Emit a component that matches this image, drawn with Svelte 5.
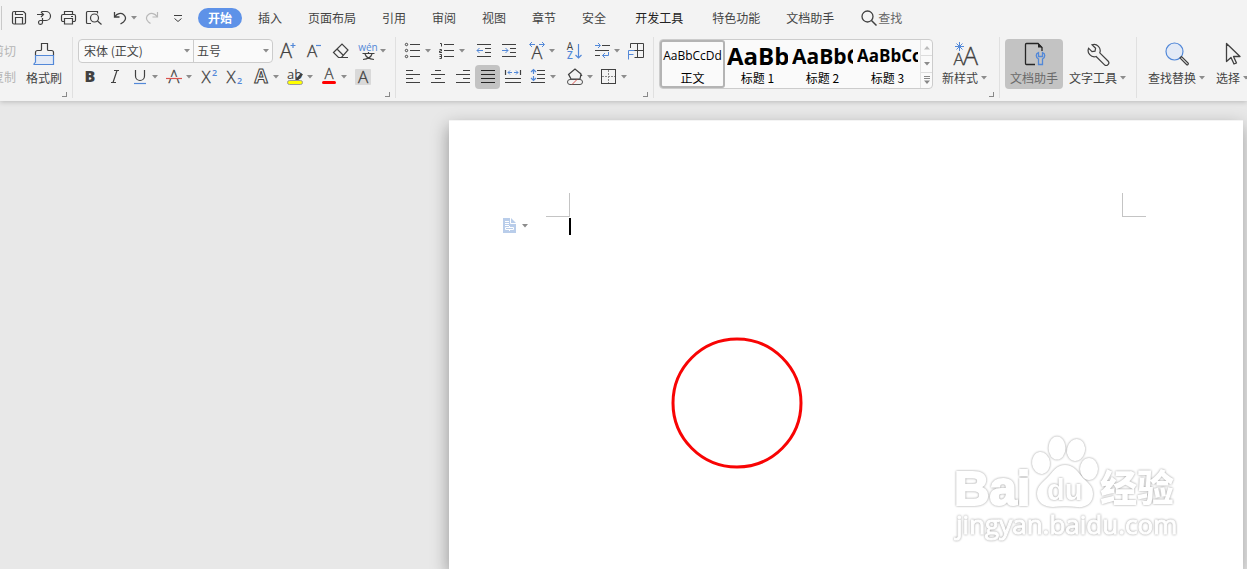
<script>
  const K = 'stroke="#404040" fill="none"';
  const B = 'stroke="#5288d8" fill="none"';
  const letter = (x, y, size, t, extra = 'stroke="#404040" stroke-width=".3"') =>
    `<text x="${x}" y="${y}" font-size="${size}" text-anchor="middle" fill="#404040" ${extra}>${t}</text>`;

  const icons = {
    save: `<path ${K} stroke-width="1.200" d="M7 5.500h9.500l2 2v9a1.500 1.500 0 0 1-1.500 1.500h-10a1.500 1.500 0 0 1-1.500-1.500v-9.500a1.500 1.500 0 0 1 1.500-1.500zM8.500 18v-6.500h7v6.500M8.500 5.500v3h7.500"/>`,
    export: `<path ${K} stroke-width="1.200" d="M5 8.500h6.500M9 6l2.500 2.500L9 11M9.500 5.500h4.500a4.500 4.500 0 0 1 0 9h-6a2 2 0 1 0 2.500 2V12"/>`,
    print: `<path ${K} stroke-width="1.200" d="M7.500 8.500v-3h8v3M7 15.500h-1a1.500 1.500 0 0 1-1.500-1.500v-4a1.500 1.500 0 0 1 1.500-1.500h11a1.500 1.500 0 0 1 1.500 1.500v4a1.500 1.500 0 0 1-1.500 1.500h-1M7.500 12.500h8v5.500h-8zM14 10.500h2"/>`,
    preview: `<path ${K} stroke-width="1.200" d="M9 17.500h-3.500a1 1 0 0 1-1-1v-10a1 1 0 0 1 1-1h10v2M15.500 15l4 3.500"/><circle ${K} stroke-width="1.200" cx="12.500" cy="12" r="4"/>`,
    undo: `<path ${K} stroke-width="1.300" d="M7.500 6v5h5M8 10.500c2-3 6-4 8.500-2s3 5 0 7.500l-3 2"/>`,
    redo: `<path stroke="#b9b9b9" fill="none" stroke-width="1.200" d="M16.500 6v5h-5M16 10.500c-2-3-6-4-8.500-2s-3 5 0 7.500l2 1.500"/>`,
    more: `<path ${K} d="M8 9.500h8M8.500 12.500l3.500 3 3.500-3"/>`,
    grow: letter(11, 19, 20, 'A') + `<path ${B} stroke-width="1.200" d="M15.500 6.500h5M18 4v5"/>`,
    shrink: letter(10, 18, 17, 'A') + `<path ${B} stroke-width="1.200" d="M14 6.500h5"/>`,
    eraser: `<path ${K} stroke-width="1.200" d="M4.500 13.500l8.500-8.500 6 6-6.500 7.500h-3zM8 10l6 6M12 18.500h7"/>`,
    phonetic: `<text x="12" y="12" font-size="10" text-anchor="middle" fill="#5288d8" style="font-weight:400">wén</text><path ${K} stroke-width="1.200" d="M6.500 14.500h12M12.500 13v1.500M9 15c1 3 4 5 9 5.500M16 15c-1 3-4 5-9 5.500"/>`,
    bold: letter(12, 17, 16, 'B', 'style="font-weight:800"'),
    italic: `<path ${K} stroke-width="1.200" d="M11 5.500h5M8 17.500h5M14 5.500l-4 12"/>`,
    underline: `<path ${K} stroke-width="1.200" d="M7.500 5v6a4.500 4.500 0 0 0 9 0v-6"/><path ${B} stroke-width="1.200" d="M6 18.500h12"/>`,
    strike: letter(12, 18, 18, 'A') + `<path stroke="#f3f3f3" d="M4 12.500h16"/><path stroke="#d9534f" stroke-width="1.200" d="M4 13.500h16"/>`,
    sup: letter(10, 18, 17, 'X') + `<text x="16" y="11" font-size="9" fill="#5288d8" style="font-weight:600">2</text>`,
    sub: letter(10, 18, 17, 'X') + `<text x="16" y="19" font-size="9" fill="#5288d8" style="font-weight:600">2</text>`,
    effect: `<text x="12" y="18" font-size="19" text-anchor="middle" fill="#f3f3f3" stroke="#404040" style="font-weight:700">A</text>`,
    highlight: `<text x="4" y="14" font-size="13" fill="#404040" style="font-weight:400">ab</text><path d="M12 15l6-7 2 1.500-5 6z" fill="#404040"/><rect x="4.500" y="15.500" width="15" height="4" rx="2" fill="#ff0" stroke="#999"/>`,
    color: letter(12, 14, 15, 'A') + `<rect x="5" y="16" width="14" height="3" rx="1.500" fill="#f00"/>`,
    shade: `<rect x="4" y="4" width="16" height="16" rx="1" fill="#d9d9d9"/>` + letter(12, 18, 17, 'A'),
    bullets: `<g ${K}><circle cx="5.500" cy="5.500" r="1.200"/><circle cx="5.500" cy="11.500" r="1.200"/><circle cx="5.500" cy="17.500" r="1.200"/><path d="M9 5.500h10M9 11.500h10M9 17.500h10" stroke-width="1.200"/></g>`,
    numbers: `<g ${K}><path d="M5 4.500h1.500v3M4.500 10.500h2v1.500h-2v1.500h2.500M4.500 15.500h2v4h-2M4.500 17.500h2"/><path d="M9 5.500h10M9 11.500h10M9 17.500h10" stroke-width="1.200"/></g>`,
    outdent: `<path ${K} stroke-width="1.200" d="M5 5.500h14M13 9.500h6M13 13.500h6M5 17.500h14"/><path ${B} d="M5 11.500h6M7.500 9L5 11.500 7.500 14"/>`,
    indent: `<path ${K} stroke-width="1.200" d="M5 5.500h14M13 9.500h6M13 13.500h6M5 17.500h14"/><path ${B} d="M5 11.500h6M8.500 9l2.500 2.500L8.500 14"/>`,
    scale: letter(12, 20, 18, 'A') + `<path ${B} d="M5 5.500h5M7 3L4.500 5.500 7 8M14 5.500h5M17 3l2.500 2.500L17 8"/>`,
    sort: letter(8, 11, 10, 'A', 'style="font-weight:400"') + `<text x="8" y="20" font-size="10" text-anchor="middle" fill="#5288d8" style="font-weight:600">Z</text><path ${B} stroke-width="1.200" d="M16.500 5v14M13.500 16l3 3 3-3"/>`,
    wrap: `<path ${K} stroke-width="1.200" d="M12 6.500h8M5 11.500h14M5 16.500h5"/><path ${B} d="M5 6.500h5M8 4l2.500 2.500L8 9M18.500 13v3.500h-6M15 14l-2.500 2.500L15 19"/>`,
    frame: `<path ${K} d="M6.500 9v-4.500h13v14h-9M13.500 4.500v14M6.500 11.500h13"/><path ${B} d="M10.500 11.500h-6v9M4.500 15.500h5"/>`,
    left: `<path ${K} stroke-width="1.200" d="M5 5.500h7M5 9.500h14M5 13.500h7M5 17.500h14"/>`,
    center: `<path ${K} stroke-width="1.200" d="M9 5.500h6M5 9.500h14M9 13.500h6M5 17.500h14"/>`,
    right: `<path ${K} stroke-width="1.200" d="M12 5.500h7M5 9.500h14M12 13.500h7M5 17.500h14"/>`,
    justify: `<path stroke="#252525" stroke-width="1.200" d="M5 5.500h14M5 9.500h14M5 13.500h14M5 17.500h14"/>`,
    spread: `<path ${K} stroke-width="1.200" d="M4.500 5v5M19.500 5v5M4 13.500h16M4 17.500h16"/><path ${B} d="M7 7.500h4M9 5.500L7 7.500l2 2M13 7.500h4M15 5.500l2 2-2 2"/>`,
    spacing: `<path ${K} stroke-width="1.200" d="M11 5.500h8M11 9.500h8M11 13.500h8M5 17.500h14"/><path ${B} stroke-width="1.200" d="M7.500 5v4M5 7l2.500-2.500L10 7M7.500 11v4M5 13l2.500 2.500L10 13"/>`,
    fill: `<path ${K} stroke-width="1.200" d="M5.500 9.500l6.500-5.500 6 5-1 5h-9zM6 10l2 4M17 8l2 3"/><rect x="4.500" y="14.500" width="15" height="5" rx="2.500" fill="#f3f3f3" stroke="#505050"/><path stroke="#d9534f" d="M9 19.500l5-5"/>`,
    border: `<rect ${K} x="4.500" y="4.500" width="14" height="14"/><path stroke="#888" stroke-dasharray="2 1" d="M11.500 5v13M5 11.500h13"/>`
  };

  const big = {
    brush: `<path d="M5.500 13.500h18v9h-18z" fill="#e3eaf6"/><path ${K} stroke-width="1.200" d="M5.500 13.500v-3a2 2 0 0 1 2-2h3a1 1 0 0 0 1-1V1.500h6v6a1 1 0 0 0 1 1h3a2 2 0 0 1 2 2v3"/><path ${B} stroke-width="1.200" d="M5.500 13.500h18v9H3.500M5.500 13.500v6.500l-2 2.500"/>`,
    newStyle: letter(7.500, 23, 17, 'A') + letter(19.500, 23, 25, 'A') + `<path ${B} d="M8.500 0v9M4 4.500h9M5.500 1.500l6 6M11.500 1.500l-6 6"/>`,
    assistant: `<path stroke="#252525" fill="none" stroke-width="1.300" d="M15 22.500H6.500a1 1 0 0 1-1-1v-19a1 1 0 0 1 1-1H18l4 4V9"/><path d="M18 1l4.500 4.500H18z" fill="#252525"/><path ${B} stroke-width="1.300" d="M18.500 10.500c-3 1-3 5 0 6.500v5.500h4v-5.500c3-1.500 3-5.500 0-6.500v4h-4z"/>`,
    wrench: `<path ${K} stroke-width="1.200" d="M8 2.800a6.200 6.200 0 0 1 7.800 8l8.200 8.200a2.600 2.600 0 0 1-3.700 3.700l-8.200-8.200A6.200 6.200 0 0 1 4.600 6.200l3.400 3.500 3-.5.6-2.900z"/>`,
    find: `<circle cx="11.500" cy="9.500" r="8.500" fill="#e3eaf6" stroke="#5288d8" stroke-width="1.200"/><path ${K} stroke-width="1.100" d="M17 16l1.500-1.500 6.500 6.500a1 1 0 0 1-1.500 1.500z"/>`,
    pointer: `<path ${K} stroke-width="1.300" stroke-linejoin="round" d="M7.500 1.500v18l4.500-4 3 6.500 2.500-1-3-6.500h6.500z"/>`
  };

  const tabs = ['插入', '页面布局', '引用', '审阅', '视图', '章节', '安全', '开发工具', '特色功能', '文档助手'];

  const fontRow1 = [
    { i: 'grow', t: '增大字号' }, { i: 'shrink', t: '减小字号' },
    { i: 'eraser', t: '清除格式' }, { i: 'phonetic', t: '拼音指南', c: true }
  ];
  const fontRow2 = [
    { i: 'bold', t: '加粗' }, { i: 'italic', t: '倾斜' }, { i: 'underline', t: '下划线', c: true },
    { i: 'strike', t: '删除线', c: true }, { i: 'sup', t: '上标' }, { i: 'sub', t: '下标' },
    { i: 'effect', t: '文字效果', c: true, s: true }, { i: 'highlight', t: '突出显示', c: true },
    { i: 'color', t: '字体颜色', c: true }, { i: 'shade', t: '字符底纹' }
  ];
  const paraRow1 = [
    { i: 'bullets', t: '项目符号', c: true }, { i: 'numbers', t: '编号', c: true },
    { i: 'outdent', t: '减少缩进量', s: true }, { i: 'indent', t: '增加缩进量' },
    { i: 'scale', t: '中文版式', c: true, s: true }, { i: 'sort', t: '排序', s: true },
    { i: 'wrap', t: '显示编辑标记', c: true, s: true }, { i: 'frame', t: '制表位' }
  ];
  const paraRow2 = [
    { i: 'left', t: '左对齐' }, { i: 'center', t: '居中' }, { i: 'right', t: '右对齐' },
    { i: 'justify', t: '两端对齐', on: true }, { i: 'spread', t: '分散对齐' },
    { i: 'spacing', t: '行距', c: true }, { i: 'fill', t: '底纹颜色', c: true, s: true },
    { i: 'border', t: '边框', c: true }
  ];
  const styles = [
    { sample: 'AaBbCcDd', name: '正文', k: 'body' },
    { sample: 'AaBb', name: '标题 1', k: 'h1' },
    { sample: 'AaBbC', name: '标题 2', k: 'h2' },
    { sample: 'AaBbCc', name: '标题 3', k: 'h3' }
  ];
  let current = $state('正文');
</script>

{#snippet caret()}
  <svg class="caret" width="6" height="4" viewBox="0 0 6 4" aria-hidden="true"><path d="M0 0h6L3 3.500z" fill="#8c8c8c" /></svg>
{/snippet}

{#snippet tool(b)}
  <button class="tool" class:split={b.c} class:spaced={b.s} class:on={b.on} aria-label={b.t}>
    <svg width="24" height="24" viewBox="0 0 24 24" aria-hidden="true">{@html icons[b.i]}</svg>
    {#if b.c}{@render caret()}{/if}
  </button>
{/snippet}

{#snippet bigTool(icon, label, hasCaret, on)}
  <button class="big" class:pressed={on}>
    <svg width="28" height="24" viewBox="0 0 28 24" aria-hidden="true">{@html big[icon]}</svg>
    <span class="label">{label}{#if hasCaret}{@render caret()}{/if}</span>
  </button>
{/snippet}

{#snippet launcher()}
  <button class="launcher" aria-label="更多选项"></button>
{/snippet}

<div class="app">
  <header class="topbar">
    <div class="quick">
      {@render tool({ i: 'save', t: '保存' })}
      {@render tool({ i: 'export', t: '输出为PDF' })}
      {@render tool({ i: 'print', t: '打印' })}
      {@render tool({ i: 'preview', t: '打印预览' })}
      {@render tool({ i: 'undo', t: '撤销', c: true })}
      {@render tool({ i: 'redo', t: '恢复' })}
      {@render tool({ i: 'more', t: '自定义' })}
    </div>
    <nav>
      <button class="tab active">开始</button>
      {#each tabs as t}
        <button class="tab" class:wide={t === '开发工具'}>{t}</button>
      {/each}
    </nav>
    <button class="search">
      <svg width="16" height="16" viewBox="0 0 16 16" aria-hidden="true"><circle cx="6.500" cy="6.500" r="5.500" stroke="#404040" stroke-width="1.300" fill="none" /><path d="M10.500 10.500l5 5" stroke="#404040" stroke-width="1.500" /></svg>
      查找
    </button>
  </header>

  <div class="ribbon">
    <section class="group clip">
      <div class="edge">
        <button disabled>剪切</button>
        <button disabled>复制</button>
      </div>
      {@render bigTool('brush', '格式刷', false, false)}
      {@render launcher()}
    </section>

    <section class="group font">
      <div class="row roomy">
        <div class="combo">
          <label class="family"><select aria-label="字体"><option>宋体 (正文)</option></select>{@render caret()}</label>
          <label class="size"><select aria-label="字号"><option>五号</option></select>{@render caret()}</label>
        </div>
        {#each fontRow1 as b}{@render tool(b)}{/each}
      </div>
      <div class="row">
        {#each fontRow2 as b}{@render tool(b)}{/each}
      </div>
      {@render launcher()}
    </section>

    <section class="group para">
      <div class="row">
        {#each paraRow1 as b}{@render tool(b)}{/each}
      </div>
      <div class="row">
        {#each paraRow2 as b}{@render tool(b)}{/each}
      </div>
      {@render launcher()}
    </section>

    <section class="group style">
      <div class="gallery">
        {#each styles as s}
          <button class="card {s.k}" class:chosen={current === s.name} onclick={() => (current = s.name)}>
            <span class="sample">{s.sample}</span>
            <span class="name">{s.name}</span>
          </button>
        {/each}
        <div class="scroller">
          <button aria-label="上一行"><svg width="6" height="4" viewBox="0 0 6 4"><path d="M0 3.500h6L3 0z" fill="#bbb" /></svg></button>
          <button aria-label="下一行">{@render caret()}</button>
          <button aria-label="展开"><svg width="6" height="8" viewBox="0 0 6 8"><path d="M0 .5h6M0 2.500h6" stroke="#888" /><path d="M0 4.500h6L3 8z" fill="#888" /></svg></button>
        </div>
      </div>
      {@render bigTool('newStyle', '新样式', true, false)}
      {@render launcher()}
    </section>

    <section class="group helper">
      {@render bigTool('assistant', '文档助手', false, true)}
      {@render bigTool('wrench', '文字工具', true, false)}
    </section>

    <section class="group edit">
      {@render bigTool('find', '查找替换', true, false)}
      {@render bigTool('pointer', '选择', true, false)}
    </section>
  </div>

  <main>
    <article class="page">
      <i class="mark tl"></i>
      <i class="mark tr"></i>
      <button class="para-tag" aria-label="段落布局">
        <svg width="13" height="15" viewBox="0 0 13 15" aria-hidden="true"><path d="M0 0h8l5 5v10H0z" fill="#b9cdea" /><path d="M7.500 0v5.500H13M2 3.500h4M2 5.500h4M2 7.500h4M2.500 9.500h8v2h-8zM6.500 8v1M6.500 12v1" stroke="#fff" fill="none" /></svg>
        {@render caret()}
      </button>
      <div class="cursor"></div>
      <svg class="ring" width="132" height="132" viewBox="0 0 132 132" aria-hidden="true"><circle cx="66" cy="66" r="64" fill="none" stroke="#f80404" stroke-width="3" /></svg>
      <svg class="logo" width="240" height="116" viewBox="0 0 240 116">
        <g fill="#fff">
          <g class="soft">
            <ellipse cx="90" cy="30" rx="9" ry="11" transform="rotate(-8 90 30)" />
            <ellipse cx="106" cy="15" rx="8.500" ry="11.500" />
            <ellipse cx="125" cy="17" rx="9" ry="11" transform="rotate(12 125 17)" />
            <ellipse cx="138" cy="36" rx="9" ry="11" />
            <path d="M114 32c9 0 13 7 18 13 5 5 10 8 10 16 0 10-8 14-16 13-8-1-16-1-24 0-8 0-16-4-16-13 0-8 5-11 10-16 6-6 9-13 18-13z" />
          </g>
          <text class="soft latin" x="3" y="72" font-size="49">Bai</text>
          <text class="soft du" x="96" y="67" font-size="29">du</text>
          <text class="soft cjk" x="149" y="69" font-size="37">经验</text>
          <text class="soft url" x="5" y="101" font-size="26">jingyan.baidu.com</text>
        </g>
      </svg>
    </article>
  </main>
</div>

<style>
  :global(body) {
    margin: 0;
  }
  .app {
    display: flex;
    flex-direction: column;
    height: 100vh;
    overflow: hidden;
    background: #f3f3f3;
    color: #444;
    font: 12px/20px "Noto Sans CJK SC", sans-serif;
  }
  button,
  select {
    font: inherit;
    color: inherit;
    background: none;
    border: 0;
    padding: 0;
    margin: 0;
  }
  svg {
    display: block;
    flex: none;
  }
  svg :global(text) {
    font-family: "Open Sans", sans-serif;
    font-weight: 300;
  }
  .topbar {
    position: relative;
    z-index: 2;
    background: #f3f3f3;
    display: flex;
    align-items: center;
    height: 36px;
    flex: none;
    white-space: nowrap;
  }
  .quick {
    display: flex;
    align-items: center;
    margin-left: 1px;
    padding-left: 4px;
    border-left: 1px solid #c9c9c9;
    height: 24px;
  }
  nav {
    display: flex;
    margin-left: 8px;
  }
  .tab {
    padding: 0 13px;
  }
  .tab.wide {
    padding: 0 16px;
    color: #222;
  }
  .tab.active {
    padding: 0 10px;
    margin-right: 3px;
    border-radius: 10px;
    background: #5e92e8;
    color: #fff;
    font-weight: 700;
  }
  .search {
    display: flex;
    align-items: center;
    gap: 1px;
    margin-left: 14px;
    color: #666;
  }
  .ribbon {
    position: relative;
    z-index: 1;
    display: flex;
    flex: none;
    padding: 1px 0 3px;
    background: #f3f3f3;
    box-shadow: 0 1px 5px rgba(0, 0, 0, 0.2);
    white-space: nowrap;
  }
  .group {
    position: relative;
    flex: none;
    box-sizing: border-box;
    min-height: 61px;
    padding-top: 1px;
    border-right: 1px solid #e0e0e0;
  }
  .clip,
  .style,
  .helper,
  .edit {
    display: flex;
    align-items: flex-start;
    padding-top: 2px;
  }
  .clip {
    gap: 10px;
    padding-right: 10px;
  }
  .edge {
    display: flex;
    flex-direction: column;
    align-items: flex-end;
    gap: 6px;
    width: 16px;
    overflow: hidden;
    color: #b5b5b5;
    padding-top: 2px;
  }
  .font {
    padding-left: 4px;
    padding-right: 6px;
  }
  .para {
    padding-left: 4px;
    padding-right: 5px;
  }
  .style {
    padding-left: 5px;
    padding-right: 12px;
    gap: 9px;
  }
  .helper {
    padding-left: 5px;
    padding-right: 10px;
    gap: 6px;
  }
  .edit {
    padding-left: 11px;
    gap: 11px;
    border: 0;
  }
  .row {
    display: flex;
    align-items: center;
    height: 26px;
  }
  .roomy {
    gap: 2px;
  }
  .tool {
    display: flex;
    align-items: center;
    width: 25px;
    height: 24px;
    padding-left: 1px;
    box-sizing: border-box;
    border-radius: 4px;
    flex: none;
  }
  .tool.split {
    width: 34px;
  }
  .tool.spaced {
    margin-left: 3px;
  }
  .tool.on {
    background: #c3c3c3;
  }
  .combo {
    display: flex;
    box-sizing: border-box;
    width: 195px;
    height: 24px;
    margin-left: 1px;
    margin-right: -1px;
    border: 1px solid #ccc;
    border-radius: 4px;
    background: #fafafa;
  }
  .combo label {
    display: grid;
    align-items: center;
    flex: 1;
  }
  .combo .family {
    flex: none;
    width: 114px;
    border-right: 1px solid #ccc;
  }
  .combo select {
    grid-area: 1 / 1;
    appearance: none;
    padding-left: 5px;
    height: 20px;
    outline: 0;
  }
  .combo .size select {
    padding-left: 3px;
  }
  .combo .caret {
    grid-area: 1 / 1;
    justify-self: end;
    margin-right: 3px;
    pointer-events: none;
  }
  .big {
    display: flex;
    flex-direction: column;
    align-items: center;
    height: 50px;
    padding-top: 3px;
    box-sizing: border-box;
  }
  .big .label {
    display: flex;
    align-items: center;
    gap: 3px;
    margin-top: 2px;
  }
  .big.pressed {
    padding-left: 5px;
    padding-right: 5px;
    border-radius: 4px;
    background: #c3c3c3;
    color: #6a6a6a;
  }
  .launcher {
    position: absolute;
    right: 5px;
    bottom: 1px;
    width: 5px;
    height: 5px;
    border-right: 1px solid #888;
    border-bottom: 1px solid #888;
  }
  .gallery {
    display: flex;
    box-sizing: border-box;
    height: 50px;
    border: 1px solid #ccc;
    border-radius: 4px;
    background: #fafafa;
    color: #000;
  }
  .card {
    display: flex;
    flex-direction: column;
    align-items: center;
    width: 65px;
    padding: 0 2px;
    overflow: hidden;
    box-sizing: border-box;
    border-radius: 3px;
  }
  .card.chosen {
    box-shadow: inset 0 0 0 2px #b4b4b4;
  }
  .sample {
    display: flex;
    align-items: center;
    width: 100%;
    height: 28px;
    padding-top: 4px;
    box-sizing: border-box;
    line-height: 24px;
    overflow: hidden;
    font-family: "Open Sans", sans-serif;
    font-weight: 700;
  }
  .body .sample {
    font-size: 12px;
    font-weight: 400;
    justify-content: center;
  }
  .h1 .sample {
    font-size: 24px;
  }
  .h2 .sample {
    font-size: 21px;
  }
  .h3 .sample {
    font-size: 17px;
  }
  .scroller {
    display: flex;
    flex-direction: column;
    width: 12px;
    border-left: 1px solid #e2e2e2;
    box-sizing: border-box;
  }
  .scroller button {
    display: flex;
    align-items: center;
    justify-content: center;
    flex: 1;
  }
  .scroller button + button {
    border-top: 1px solid #ddd;
  }
  main {
    display: flex;
    flex: 1;
    justify-content: flex-end;
    padding: 19px 4px 0 0;
    background: #e8e8e8;
  }
  .page {
    position: relative;
    box-sizing: border-box;
    width: 794px;
    padding: 97px 120px 0;
    background: #fff;
    border-top: 1px solid #f4f4f4;
    box-shadow: -1px 6px 16px rgba(0, 0, 0, 0.34);
  }
  .mark {
    position: absolute;
    top: 72px;
    width: 23px;
    height: 23px;
    border-bottom: 1px solid #c4c4c4;
  }
  .tl {
    left: 97px;
    border-right: 1px solid #c4c4c4;
  }
  .tr {
    right: 97px;
    border-left: 1px solid #c4c4c4;
  }
  .para-tag {
    position: absolute;
    left: 54px;
    top: 97px;
    display: flex;
    align-items: center;
    gap: 6px;
  }
  .cursor {
    width: 2px;
    height: 17px;
    background: #000;
  }
  .ring {
    position: absolute;
    left: 222px;
    top: 216px;
  }
  .logo {
    position: absolute;
    right: 52px;
    top: 312px;
  }
  .logo .soft {
    filter: drop-shadow(0 0 1px #999);
  }
  .logo .latin {
    font-family: "Liberation Sans", sans-serif;
    font-weight: 700;
    stroke: #fff;
    stroke-width: 2px;
  }
  .logo .du {
    font-family: "Liberation Sans", sans-serif;
    font-weight: 700;
  }
  .logo .cjk {
    font-family: "Noto Sans CJK SC", sans-serif;
    font-weight: 900;
  }
  .logo .url {
    font-weight: 400;
    stroke: #fff;
    stroke-width: 1px;
  }
</style>
